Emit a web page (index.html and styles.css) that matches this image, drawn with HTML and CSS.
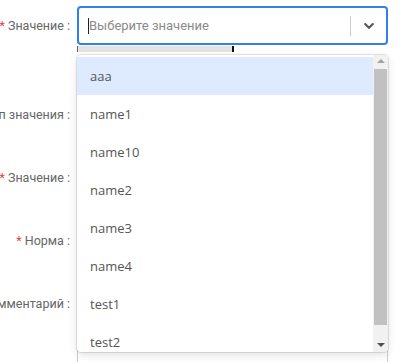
FILE: index.html
```html
<!DOCTYPE html>
<html lang="ru">
<head>
    <meta charset="UTF-8">
    <meta name="viewport" content="width=device-width, initial-scale=1.0">
    <title>Форма</title>
    <link rel="stylesheet" href="styles.css">
</head>
<body>
    <form class="form">
        <div class="form-row first-row">
            <label class="form-label"><span class="req">*</span>&nbsp;Значение :</label>
            <div class="form-field">
                <div class="select focused">
                    <div class="select-value">
                        <span class="caret"></span>
                        <span class="placeholder">Выберите значение</span>
                    </div>
                    <span class="select-sep"></span>
                    <span class="select-arrow">
                        <svg width="14" height="14" viewBox="0 0 20 20"><path d="M4.5 7.2l5.5 5.4 5.5-5.4" fill="none" stroke="#555" stroke-width="3" stroke-linecap="round" stroke-linejoin="round"/></svg>
                    </span>
                </div>
                <div class="progress"></div>

                <div class="menu">
                    <ul class="menu-list">
                        <li class="menu-item active">aaa</li>
                        <li class="menu-item">name1</li>
                        <li class="menu-item">name10</li>
                        <li class="menu-item">name2</li>
                        <li class="menu-item">name3</li>
                        <li class="menu-item">name4</li>
                        <li class="menu-item">test1</li>
                        <li class="menu-item">test2</li>
                    </ul>
                    <div class="scrollbar">
                        <span class="sb-up"></span>
                        <span class="sb-thumb"></span>
                        <span class="sb-down"></span>
                    </div>
                </div>
            </div>
        </div>

        <div class="form-row">
            <label class="form-label">Тип значения :</label>
            <div class="form-field"><input class="input" type="text"></div>
        </div>

        <div class="form-row">
            <label class="form-label"><span class="req">*</span>&nbsp;Значение :</label>
            <div class="form-field"><input class="input" type="text"></div>
        </div>

        <div class="form-row">
            <label class="form-label"><span class="req">*</span>&nbsp;Норма :</label>
            <div class="form-field"><input class="input" type="text"></div>
        </div>

        <div class="form-row">
            <label class="form-label comment-label">Комментарий :</label>
            <div class="form-field"><textarea class="textarea"></textarea></div>
        </div>
    </form>
</body>
</html>
```

FILE: styles.css
```css
body {
    margin: 0;
    padding: 0;
    background: #fff;
    font-family: "Open Sans", Arial, sans-serif;
    font-size: 13px;
    color: #555;
    overflow: hidden;
}

.form {
    padding-top: 6px;
    display: flex;
    flex-direction: column;
    gap: 25px;
}

.form-row {
    display: grid;
    grid-template-columns: 70px 311px;
    column-gap: 7px;
    align-items: center;
}

.first-row {
    align-items: start;
    margin-bottom: 18px;
}

.form-label {
    display: flex;
    justify-content: flex-end;
    white-space: nowrap;
    color: #666;
    height: 38px;
    align-items: center;
    font-family: Roboto, Arial, sans-serif;
    font-size: 12.5px;
}

.first-row .form-label {
    height: 39px;
}

.req {
    color: #e8414b;
}

.form-field {
    position: relative;
}

/* select */
.select {
    height: 39px;
    box-sizing: border-box;
    border: 2px solid #2f80ea;
    border-radius: 4px;
    display: flex;
    align-items: center;
    background: #fff;
}

.select-value {
    flex: 1;
    display: flex;
    align-items: center;
    padding-left: 9px;
}

.caret {
    width: 1px;
    height: 16px;
    background: #222;
}

.placeholder {
    color: #8a8a8a;
    font-family: Roboto, Arial, sans-serif;
    font-size: 13px;
}

.select-sep {
    width: 1px;
    height: 20px;
    background: #ccc;
}

.select-arrow {
    width: 35px;
    display: flex;
    justify-content: center;
    align-items: center;
}

.progress {
    width: 154px;
    height: 6px;
    margin-top: 1px;
    background: #e3e3e3;
    border-left: 1px solid #666;
    border-right: 2px solid #111;
}

.input {
    display: block;
    width: 100%;
    height: 38px;
    box-sizing: border-box;
    border: 1px solid #ccc;
    border-radius: 4px;
}

.comment-label {
    align-self: start;
}

.textarea {
    display: block;
    width: 100%;
    height: 120px;
    box-sizing: border-box;
    border: 1px solid #ccc;
    border-radius: 4px;
    resize: none;
    margin-top: -4px;
}

/* dropdown menu */
.menu {
    position: absolute;
    top: 49px;
    left: 0;
    width: 311px;
    height: 297px;
    box-sizing: border-box;
    background: #fff;
    border-radius: 4px;
    box-shadow: 0 0 0 1px rgba(0, 0, 0, 0.1), 0 3px 8px rgba(0, 0, 0, 0.12);
    display: flex;
    overflow: hidden;
    z-index: 10;
}

.menu-list {
    list-style: none;
    margin: 0;
    padding: 2px 0 0;
    flex: 1;
}

.menu-item {
    height: 38px;
    line-height: 38px;
    padding-left: 13px;
    color: #555;
}

.menu-item.active {
    background: #deebff;
}

.scrollbar {
    width: 15px;
    background: #f1f1f1;
    display: flex;
    flex-direction: column;
    align-items: center;
}

.sb-up,
.sb-down {
    height: 14px;
    width: 15px;
    position: relative;
}

.sb-up::after,
.sb-down::after {
    content: "";
    position: absolute;
    left: 4px;
    border-left: 4px solid transparent;
    border-right: 4px solid transparent;
}

.sb-up::after {
    top: 4px;
    border-bottom: 4px solid #a3a3a3;
}

.sb-down::after {
    top: 5px;
    border-top: 4px solid #505050;
}

.sb-thumb {
    width: 13px;
    height: 256px;
    background: #c1c1c1;
    margin-bottom: auto;
}
```
